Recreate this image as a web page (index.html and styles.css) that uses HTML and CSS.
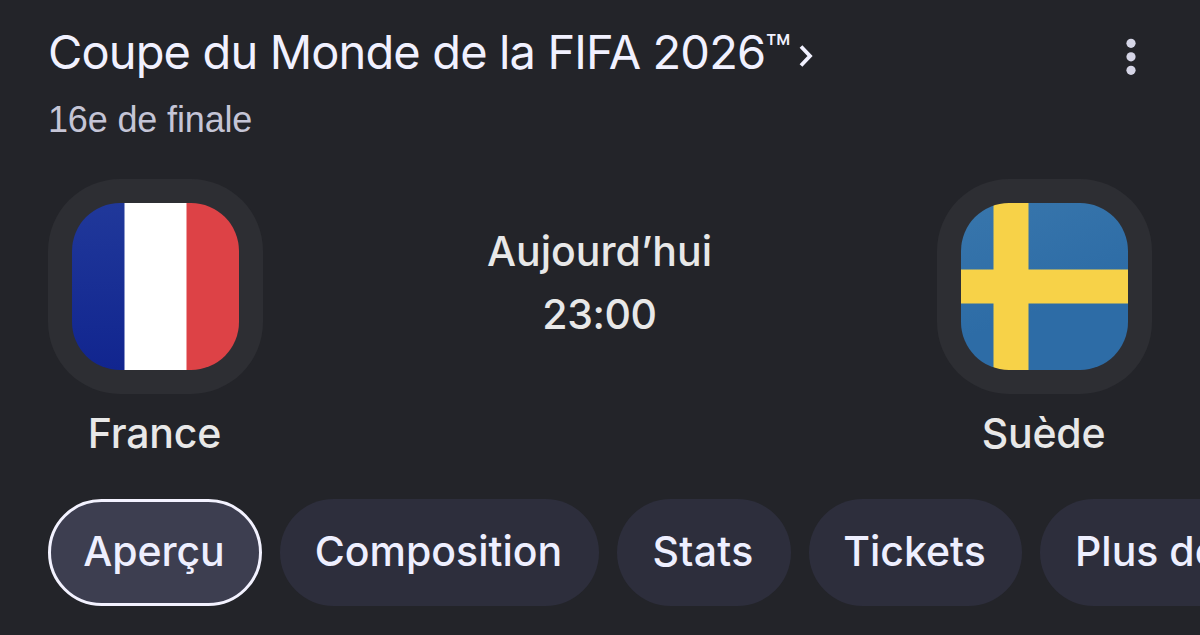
FILE: index.html
```html
<!DOCTYPE html>
<html lang="fr">

<head>
    <meta charset="UTF-8">
    <meta name="viewport" content="width=device-width, initial-scale=1.0">
    <title>France - Suède</title>
    <link rel="stylesheet" href="styles.css">
</head>

<body>

    <!-- Match card -->
    <div class="card">

        <!-- Competition title & menu -->
        <div class="header">
            <div class="heading">
                <h1 class="title">
                    <span class="title-text">Coupe du Monde de la FIFA 2026</span>
                    <span class="trademark">™</span>
                    <svg class="chevron" width="14" height="24" viewBox="0 0 14 24">
                        <path d="M2 2.5L11 12L2 21.5" fill="none" stroke="currentColor" stroke-width="3.8" />
                    </svg>
                </h1>
                <p class="round">16e de finale</p>
            </div>
            <svg class="menu" width="10" height="38" viewBox="0 0 10 38">
                <circle cx="5" cy="5.3" r="4.6" />
                <circle cx="5" cy="18.8" r="4.6" />
                <circle cx="5" cy="32.3" r="4.6" />
            </svg>
        </div>

        <!-- Teams & kick-off time -->
        <div class="match">
            <div class="team">
                <div class="badge">
                    <div class="flag france"></div>
                </div>
                <p class="team-name">France</p>
            </div>
            <div class="kickoff">
                <p class="day">Aujourd’hui</p>
                <p class="time">23:00</p>
            </div>
            <div class="team">
                <div class="badge">
                    <div class="flag sweden"></div>
                </div>
                <p class="team-name">Suède</p>
            </div>
        </div>

        <!-- Tabs -->
        <div class="tabs">
            <div class="tab active tab-overview">Aperçu</div>
            <div class="tab tab-lineup">Composition</div>
            <div class="tab tab-stats">Stats</div>
            <div class="tab tab-tickets">Tickets</div>
            <div class="tab tab-more">Plus de</div>
        </div>
    </div>

</body>

</html>
```
FILE: styles.css
```css
/* Page background & text styling */
body {
    background-color: #232429;
    font-family: Inter, "Liberation Sans", sans-serif;
    margin: 0;
    overflow: hidden;
}

h1,
p {
    margin: 0;
    font-weight: 400;
    white-space: nowrap;
}

/* Main container */
.card {
    height: 635px;
    padding: 22px 48px 0;
    box-sizing: border-box;
    overflow: hidden;
}

/* Title row */
.header {
    display: flex;
    justify-content: space-between;
    height: 157px;
}

.title {
    display: flex;
    color: #f1f1ff;
    font-size: 47px;
    line-height: 60px;
}

.title-text {
    letter-spacing: -0.87px;
}

.trademark {
    font-size: 42px;
    line-height: 55px;
}

.chevron {
    margin: 22px 0 0 8px;
}

.round {
    color: #c5c5d6;
    font-family: "Liberation Sans", Arial, sans-serif;
    font-size: 36px;
    letter-spacing: -0.15px;
    line-height: 44px;
    margin-top: 16px;
}

.menu {
    fill: #d5d5e6;
    margin: 16px 16px 0 0;
}

/* Teams */
.match {
    display: flex;
    justify-content: space-between;
    height: 320px;
}

.team {
    display: flex;
    flex-direction: column;
    align-items: center;
    width: 215px;
}

.badge {
    display: flex;
    align-items: center;
    justify-content: center;
    width: 215px;
    height: 215px;
    background-color: #2d2e33;
    border-radius: 72px;
}

.flag {
    width: 167px;
    height: 167px;
    border-radius: 48px;
}

.france {
    background:
        linear-gradient(to right, transparent 52px, #fff 53px, #fff 114px, transparent 115px),
        linear-gradient(to right, transparent 80px, #dd4246 80px),
        linear-gradient(#20389a, #11258f);
}

.sweden {
    background:
        linear-gradient(to right, transparent 32px, #f7d248 33px, #f7d248 67px, transparent 68px),
        linear-gradient(transparent 66px, #f7d248 67px, #f7d248 100px, transparent 101px),
        linear-gradient(160deg, #3876ac, #2d6ca6 60%);
}

.team-name {
    color: #e8e8e8;
    font-size: 41px;
    font-weight: 500;
    letter-spacing: -0.2px;
    line-height: 50px;
    margin-top: 14px;
    padding-right: 2px;
}

.kickoff {
    color: #e8e8e8;
    font-size: 41px;
    line-height: 63px;
    text-align: center;
    padding: 41px 1px 0 0;
}

.kickoff p {
    font-weight: 500;
}

.time {
    letter-spacing: -0.4px;
}

/* Tabs */
.tabs {
    display: flex;
    gap: 18px;
}

.tab {
    flex-shrink: 0;
    box-sizing: border-box;
    height: 107px;
    padding-right: 2px;
    background-color: #2d2e3c;
    border-radius: 54px;
    color: #eeefff;
    font-size: 41px;
    font-weight: 500;
    line-height: 104px;
    text-align: center;
    white-space: nowrap;
}

.active {
    background-color: #3d3e50;
    border: 3px solid #f3f2ff;
    line-height: 98px;
}

.tab-overview {
    width: 214px;
    letter-spacing: -0.1px;
}

.tab-lineup {
    width: 319px;
}

.tab-stats {
    width: 174px;
    letter-spacing: 0.3px;
}

.tab-tickets {
    width: 213px;
}

.tab-more {
    width: 220px;
    padding-left: 35px;
    text-align: left;
}
```
